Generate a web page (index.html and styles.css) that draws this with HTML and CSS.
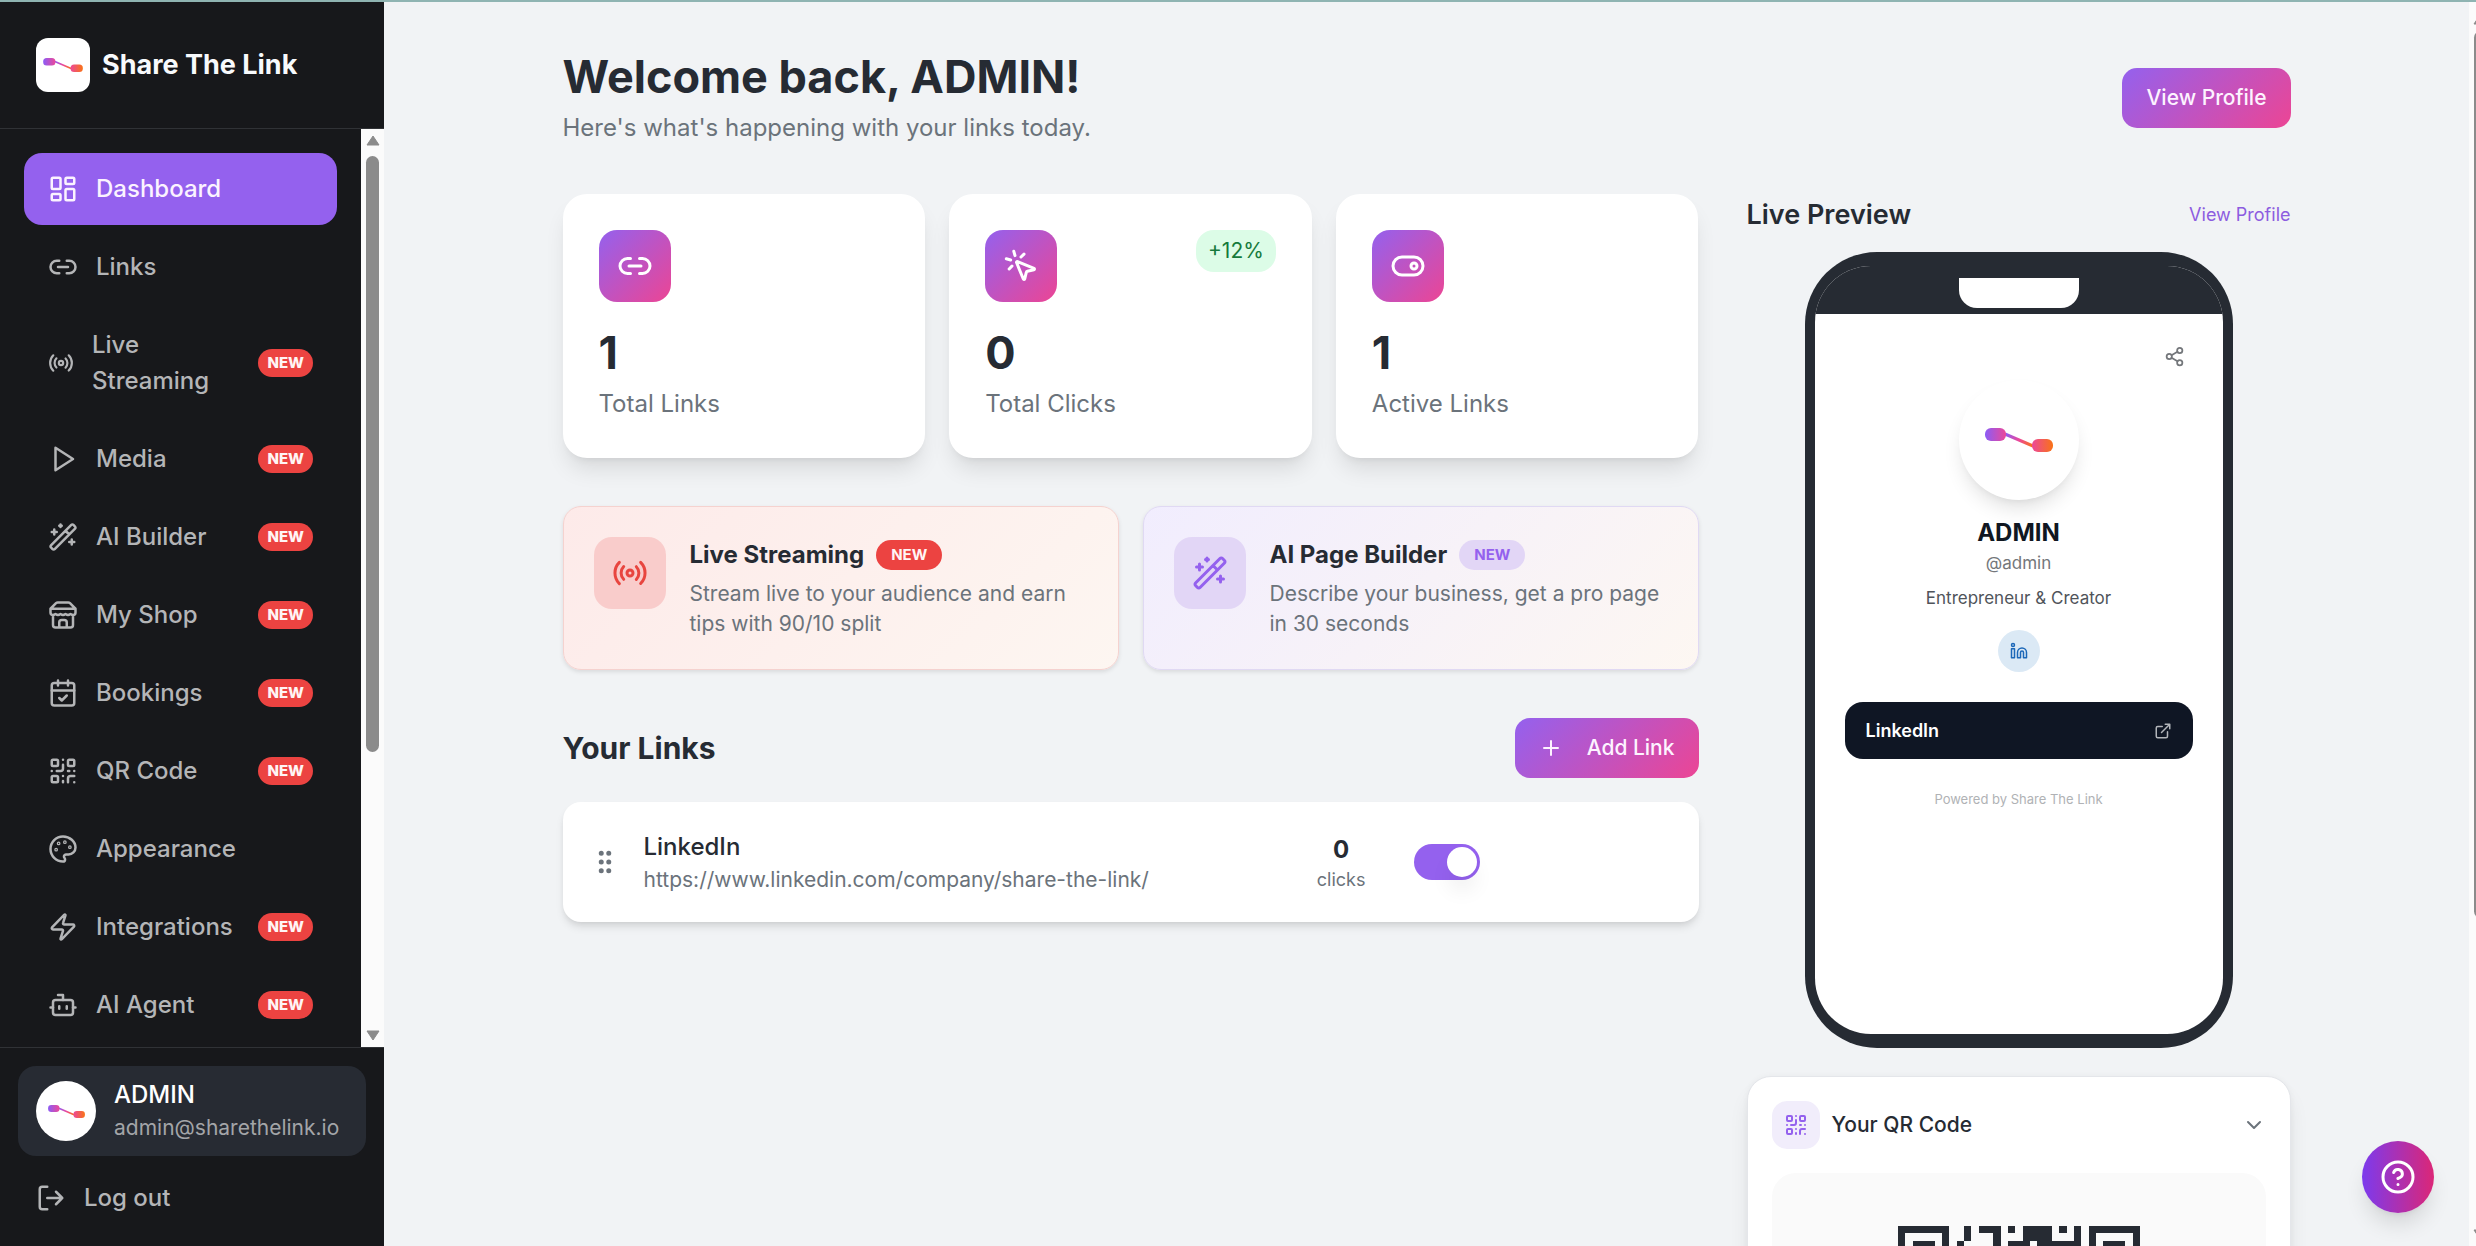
FILE: index.html
```html
<!DOCTYPE html>
<html lang="en">
<head>
<meta charset="utf-8">
<meta name="viewport" content="width=device-width, initial-scale=1">
<title>Dashboard - Share The Link</title>
<link rel="stylesheet" href="styles.css">
</head>
<body>
<svg class="sprite" aria-hidden="true">
  <defs>
    <linearGradient id="brand-a" x1="0" y1="0" x2="1" y2="0"><stop offset="0" stop-color="#8b5cf6"/><stop offset="1" stop-color="#ec4899"/></linearGradient>
    <linearGradient id="brand-b" x1="0" y1="0" x2="1" y2="0"><stop offset="0" stop-color="#ec4899"/><stop offset="1" stop-color="#f97316"/></linearGradient>
    <linearGradient id="brand-c" gradientUnits="userSpaceOnUse" x1="20" y1="6" x2="48" y2="18"><stop offset="0" stop-color="#8b5cf6"/><stop offset=".5" stop-color="#ec4899"/><stop offset="1" stop-color="#f97316"/></linearGradient>
  </defs>
  <symbol id="brand" viewBox="0 0 68 24">
    <path d="M20 6l28 12" stroke="url(#brand-c)" stroke-width="3"/>
    <rect width="21" height="13" rx="6" fill="url(#brand-a)"/>
    <rect x="47" y="11" width="21" height="13" rx="6" fill="url(#brand-b)"/>
  </symbol>
  <symbol id="dashboard" viewBox="0 0 24 24"><rect width="7" height="9" x="3" y="3" rx="1"/><rect width="7" height="5" x="14" y="3" rx="1"/><rect width="7" height="9" x="14" y="12" rx="1"/><rect width="7" height="5" x="3" y="16" rx="1"/></symbol>
  <symbol id="link" viewBox="0 0 24 24"><path d="M9 17H7A5 5 0 0 1 7 7h2M15 7h2a5 5 0 1 1 0 10h-2M8 12h8"/></symbol>
  <symbol id="radio" viewBox="0 0 24 24"><path d="M4.9 19.1C1 15.2 1 8.8 4.9 4.9M7.8 16.2c-2.3-2.3-2.3-6.1 0-8.5M16.2 7.8c2.3 2.3 2.3 6.1 0 8.5M19.1 4.9C23 8.8 23 15.1 19.1 19"/><circle cx="12" cy="12" r="2"/></symbol>
  <symbol id="play" viewBox="0 0 24 24"><path d="M6 3l14 9-14 9z"/></symbol>
  <symbol id="wand" viewBox="0 0 24 24"><path d="m21.64 3.64-1.28-1.28a1.21 1.21 0 0 0-1.72 0L2.36 18.64a1.21 1.21 0 0 0 0 1.72l1.28 1.28a1.2 1.2 0 0 0 1.72 0L21.64 5.36a1.2 1.2 0 0 0 0-1.72M14 7l3 3M5 6v4M19 14v4M10 2v2M7 8H3M21 16h-4M11 3H9"/></symbol>
  <symbol id="store" viewBox="0 0 24 24"><path d="m2 7 4.41-4.41A2 2 0 0 1 7.83 2h8.34a2 2 0 0 1 1.42.59L22 7M4 12v8a2 2 0 0 0 2 2h12a2 2 0 0 0 2-2v-8M15 22v-4a2 2 0 0 0-2-2h-2a2 2 0 0 0-2 2v4M2 7h20M22 7v3a2 2 0 0 1-2 2a2.7 2.7 0 0 1-1.59-.63.7.7 0 0 0-.82 0A2.7 2.7 0 0 1 16 12a2.7 2.7 0 0 1-1.59-.63.7.7 0 0 0-.82 0A2.7 2.7 0 0 1 12 12a2.7 2.7 0 0 1-1.59-.63.7.7 0 0 0-.82 0A2.7 2.7 0 0 1 8 12a2.7 2.7 0 0 1-1.59-.63.7.7 0 0 0-.82 0A2.7 2.7 0 0 1 4 12a2 2 0 0 1-2-2V7"/></symbol>
  <symbol id="calendar" viewBox="0 0 24 24"><rect width="18" height="18" x="3" y="4" rx="2"/><path d="M8 2v4M16 2v4M3 10h18M9 16l2 2 4-4"/></symbol>
  <symbol id="qr" viewBox="0 0 24 24"><rect width="5" height="5" x="3" y="3" rx="1"/><rect width="5" height="5" x="16" y="3" rx="1"/><rect width="5" height="5" x="3" y="16" rx="1"/><path d="M21 16h-3a2 2 0 0 0-2 2v3M21 21v.01M12 7v3a2 2 0 0 1-2 2H7M3 12h.01M12 3h.01M12 16v.01M16 12h1M21 12v.01M12 21v-1"/></symbol>
  <symbol id="palette" viewBox="0 0 24 24"><path d="M12 2C6.5 2 2 6.5 2 12s4.5 10 10 10c.926 0 1.648-.746 1.648-1.688 0-.437-.18-.835-.437-1.125-.29-.289-.438-.652-.438-1.125a1.64 1.64 0 0 1 1.668-1.668h1.996c3.051 0 5.555-2.503 5.555-5.554C21.965 6.012 17.461 2 12 2z"/><circle cx="13.5" cy="6.5" r=".5"/><circle cx="17.5" cy="10.5" r=".5"/><circle cx="8.5" cy="7.5" r=".5"/><circle cx="6.5" cy="12.5" r=".5"/></symbol>
  <symbol id="zap" viewBox="0 0 24 24"><path d="M4 14a1 1 0 0 1-.78-1.63l9.9-10.2a.5.5 0 0 1 .86.46l-1.92 6.02A1 1 0 0 0 13 10h7a1 1 0 0 1 .78 1.63l-9.9 10.2a.5.5 0 0 1-.86-.46l1.92-6.02A1 1 0 0 0 11 14z"/></symbol>
  <symbol id="bot" viewBox="0 0 24 24"><rect width="16" height="12" x="4" y="8" rx="2"/><path d="M12 8V4H8M2 14h2M20 14h2M15 13v2M9 13v2"/></symbol>
  <symbol id="logout" viewBox="0 0 24 24"><path d="M9 21H5a2 2 0 0 1-2-2V5a2 2 0 0 1 2-2h4M16 17l5-5-5-5M21 12H9"/></symbol>
  <symbol id="click" viewBox="0 0 24 24"><path d="M14 4.1 12 6M5.1 8l-2.9-.8M6 12l-1.9 2M7.2 2.2 8 5.1M9.037 9.69a.498.498 0 0 1 .653-.653l11 4.5a.5.5 0 0 1-.074.949l-4.349 1.041a1 1 0 0 0-.74.739l-1.04 4.35a.5.5 0 0 1-.95.074z"/></symbol>
  <symbol id="toggle" viewBox="0 0 24 24"><rect width="20" height="12" x="2" y="6" rx="6"/><circle cx="16" cy="12" r="2"/></symbol>
  <symbol id="plus" viewBox="0 0 24 24"><path d="M5 12h14M12 5v14"/></symbol>
  <symbol id="grip" viewBox="0 0 24 24"><circle cx="9" cy="12" r="1"/><circle cx="9" cy="5" r="1"/><circle cx="9" cy="19" r="1"/><circle cx="15" cy="12" r="1"/><circle cx="15" cy="5" r="1"/><circle cx="15" cy="19" r="1"/></symbol>
  <symbol id="share" viewBox="0 0 24 24"><circle cx="18" cy="5" r="3"/><circle cx="6" cy="12" r="3"/><circle cx="18" cy="19" r="3"/><path d="M8.59 13.51l6.83 3.98M15.41 6.51l-6.82 3.98"/></symbol>
  <symbol id="linkedin" viewBox="0 0 24 24"><path d="M16 8a6 6 0 0 1 6 6v7h-4v-7a2 2 0 0 0-4 0v7h-4v-7a6 6 0 0 1 6-6z"/><rect width="4" height="12" x="2" y="9"/><circle cx="4" cy="4" r="2"/></symbol>
  <symbol id="external" viewBox="0 0 24 24"><path d="M15 3h6v6M10 14 21 3M18 13v6a2 2 0 0 1-2 2H5a2 2 0 0 1-2-2V8a2 2 0 0 1 2-2h6"/></symbol>
  <symbol id="chevron" viewBox="0 0 24 24"><path d="m6 9 6 6 6-6"/></symbol>
  <symbol id="help" viewBox="0 0 24 24"><circle cx="12" cy="12" r="10"/><path d="M9.09 9a3 3 0 0 1 5.83 1c0 2-3 3-3 3M12 17h.01"/></symbol>
</svg>

<div class="app">
  <aside class="sidebar">
    <a class="brand" href="#">
      <span class="brand-mark"><svg class="brand-logo"><use href="#brand"/></svg></span>
      Share The Link
    </a>
    <div class="nav-area">
      <nav class="nav">
        <a class="nav-item active" href="#"><svg class="icon"><use href="#dashboard"/></svg><span class="nav-label">Dashboard</span></a>
        <a class="nav-item" href="#"><svg class="icon"><use href="#link"/></svg><span class="nav-label">Links</span></a>
        <a class="nav-item nav-item-long" href="#"><svg class="icon"><use href="#radio"/></svg><span class="nav-label">Live Streaming</span><span class="tag">NEW</span></a>
        <a class="nav-item" href="#"><svg class="icon"><use href="#play"/></svg><span class="nav-label">Media</span><span class="tag">NEW</span></a>
        <a class="nav-item" href="#"><svg class="icon"><use href="#wand"/></svg><span class="nav-label">AI Builder</span><span class="tag">NEW</span></a>
        <a class="nav-item" href="#"><svg class="icon"><use href="#store"/></svg><span class="nav-label">My Shop</span><span class="tag">NEW</span></a>
        <a class="nav-item" href="#"><svg class="icon"><use href="#calendar"/></svg><span class="nav-label">Bookings</span><span class="tag">NEW</span></a>
        <a class="nav-item" href="#"><svg class="icon"><use href="#qr"/></svg><span class="nav-label">QR Code</span><span class="tag">NEW</span></a>
        <a class="nav-item" href="#"><svg class="icon"><use href="#palette"/></svg><span class="nav-label">Appearance</span></a>
        <a class="nav-item" href="#"><svg class="icon"><use href="#zap"/></svg><span class="nav-label">Integrations</span><span class="tag">NEW</span></a>
        <a class="nav-item" href="#"><svg class="icon"><use href="#bot"/></svg><span class="nav-label">AI Agent</span><span class="tag">NEW</span></a>
      </nav>
      <div class="scrollbar" aria-hidden="true">
        <svg class="arrow" viewBox="0 0 14 11"><path d="M7 1l6 9H1z"/></svg>
        <div class="track"><div class="thumb"></div></div>
        <svg class="arrow" viewBox="0 0 14 11"><path d="M7 10l6-9H1z"/></svg>
      </div>
    </div>
    <div class="account">
      <a class="account-card" href="#">
        <span class="avatar"><svg class="avatar-logo"><use href="#brand"/></svg></span>
        <span class="account-text"><span class="account-name">ADMIN</span><span class="account-mail">admin@sharethelink.io</span></span>
      </a>
      <button class="logout" type="button"><svg class="icon"><use href="#logout"/></svg>Log out</button>
    </div>
  </aside>

  <main class="main">
    <div class="content">
      <header class="page-head">
        <div>
          <h1 class="page-title">Welcome back, ADMIN!</h1>
          <p class="page-sub">Here's what's happening with your links today.</p>
        </div>
        <button class="btn" type="button">View Profile</button>
      </header>

      <div class="columns">
        <div class="left">
          <section class="stats">
            <article class="stat">
              <div class="stat-top"><span class="stat-icon"><svg class="icon-lg"><use href="#link"/></svg></span></div>
              <p class="stat-value">1</p><p class="stat-label">Total Links</p>
            </article>
            <article class="stat">
              <div class="stat-top"><span class="stat-icon"><svg class="icon-lg"><use href="#click"/></svg></span><span class="delta">+12%</span></div>
              <p class="stat-value">0</p><p class="stat-label">Total Clicks</p>
            </article>
            <article class="stat">
              <div class="stat-top"><span class="stat-icon"><svg class="icon-lg"><use href="#toggle"/></svg></span></div>
              <p class="stat-value">1</p><p class="stat-label">Active Links</p>
            </article>
          </section>

          <section class="features">
            <a class="feature feature-live" href="#">
              <span class="feature-icon"><svg class="icon-lg"><use href="#radio"/></svg></span>
              <span class="feature-text">
                <span class="feature-title">Live Streaming <span class="pill">NEW</span></span>
                <span class="feature-desc">Stream live to your audience and earn tips with 90/10 split</span>
              </span>
            </a>
            <a class="feature feature-ai" href="#">
              <span class="feature-icon"><svg class="icon-lg"><use href="#wand"/></svg></span>
              <span class="feature-text">
                <span class="feature-title">AI Page Builder <span class="pill">NEW</span></span>
                <span class="feature-desc">Describe your business, get a pro page in 30 seconds</span>
              </span>
            </a>
          </section>

          <section>
            <div class="links-head">
              <h2 class="section-title">Your Links</h2>
              <button class="btn btn-add" type="button"><svg class="icon-md"><use href="#plus"/></svg>Add Link</button>
            </div>
            <div class="link-row">
              <svg class="icon grip"><use href="#grip"/></svg>
              <div class="link-info">
                <h3 class="link-name">LinkedIn</h3>
                <p class="link-url">https://www.linkedin.com/company/share-the-link/</p>
              </div>
              <div class="clicks"><span class="clicks-count">0</span><span class="clicks-label">clicks</span></div>
              <input class="switch" type="checkbox" role="switch" aria-label="LinkedIn active" checked>
              <div class="link-actions"></div>
            </div>
          </section>
        </div>

        <aside class="right">
          <div class="preview-head">
            <h2 class="preview-title">Live Preview</h2>
            <a class="preview-link" href="#">View Profile</a>
          </div>
          <div class="phone">
            <div class="screen">
              <div class="status"><div class="notch"></div></div>
              <div class="profile">
                <button class="share" type="button" aria-label="Share"><svg class="icon-share"><use href="#share"/></svg></button>
                <div class="profile-avatar"><svg class="profile-logo"><use href="#brand"/></svg></div>
                <h3 class="profile-name">ADMIN</h3>
                <p class="profile-handle">@admin</p>
                <p class="profile-bio">Entrepreneur &amp; Creator</p>
                <a class="social" href="#" aria-label="LinkedIn"><svg class="icon-sm"><use href="#linkedin"/></svg></a>
                <a class="profile-link" href="#">LinkedIn<svg class="icon-sm"><use href="#external"/></svg></a>
                <p class="powered">Powered by Share The Link</p>
              </div>
            </div>
          </div>
          <section class="qr-card">
            <button class="qr-head" type="button">
              <span class="qr-icon"><svg class="icon-md"><use href="#qr"/></svg></span>
              <span class="qr-title">Your QR Code</span>
              <svg class="icon-md qr-chevron"><use href="#chevron"/></svg>
            </button>
            <div class="qr-panel">
              <svg class="qr-image" viewBox="0 0 33 33" shape-rendering="crispEdges" role="img" aria-label="QR code">
                <path fill-rule="evenodd" d="M0 0h7v7H0zM1 1v5h5V1zM2 2h3v3H2zM26 0h7v7h-7zM27 1v5h5V1zM28 2h3v3h-3zM0 26h7v7H0zM1 27v5h5v-5zM2 28h3v3H2z"/>
                <path d="M9 0h1v2H9zM8 2h1v1H8zM11 0h3v1h-3zM13 1h1v2h-1zM15 0h1v1h-1zM17 0h4v2h-4zM22 0h1v1h-1zM24 0h1v2h-1zM15 2h3v1h-3zM19 2h6v1h-6z"/>
              </svg>
            </div>
          </section>
        </aside>
      </div>
    </div>
  </main>

  <div class="scrollbar page-scrollbar" aria-hidden="true">
    <svg class="arrow" viewBox="0 0 14 11"><path d="M7 1l6 9H1z"/></svg>
    <div class="track"><div class="thumb"></div></div>
    <svg class="arrow" viewBox="0 0 14 11"><path d="M7 10l6-9H1z"/></svg>
  </div>
</div>

<button class="help" type="button" aria-label="Help"><svg class="icon-lg"><use href="#help"/></svg></button>
</body>
</html>
```

FILE: styles.css
```css
:root {
  --ink: #262b33;
  --muted: #6b737b;
  --purple: #9461ee;
  --bg: #f1f3f5;
  --brand-gradient: linear-gradient(135deg, #9461ee, #ec4594);
}

* { box-sizing: border-box; margin: 0; padding: 0; }

body {
  height: 100vh;
  overflow: hidden;
  border-top: 2px solid #8fb4b2;
  background: var(--bg);
  color: var(--ink);
  font-family: Inter, "Liberation Sans", sans-serif;
  font-size: 24px;
  line-height: 36px;
}

a { color: inherit; text-decoration: none; }
button { border: 0; background: none; color: inherit; font: inherit; cursor: pointer; }
.sprite { position: absolute; width: 0; height: 0; }

.icon, .icon-lg, .icon-md, .icon-sm, .icon-share {
  flex: none;
  fill: none;
  stroke: currentColor;
  stroke-width: 2;
  stroke-linecap: round;
  stroke-linejoin: round;
}
.icon { width: 30px; height: 30px; }
.icon-lg { width: 36px; height: 36px; }
.icon-md { width: 24px; height: 24px; }
.icon-sm { width: 18px; height: 18px; }
.icon-share { width: 21px; height: 21px; }

.app { display: flex; height: 100%; }

/* Sidebar */
.sidebar {
  display: flex;
  flex-direction: column;
  flex: none;
  width: 384px;
  background: #17181b;
  color: #b4b5b7;
}
.brand {
  display: flex;
  align-items: center;
  gap: 12px;
  padding: 36px;
  border-bottom: 1px solid #303236;
  color: #f8fafc;
  font-size: 27px;
  font-weight: 700;
}
.brand-mark, .avatar, .profile-avatar {
  display: flex;
  align-items: center;
  justify-content: center;
  flex: none;
  background: #fff;
}
.brand-mark { width: 54px; height: 54px; border-radius: 12px; }
.brand-logo { width: 40px; height: 14px; }

.nav-area { display: flex; flex: 1; min-height: 0; }
.nav {
  display: flex;
  flex-direction: column;
  gap: 6px;
  flex: 1;
  padding: 24px;
  overflow: hidden;
}
.nav-item {
  display: flex;
  align-items: center;
  flex: none;
  gap: 18px;
  padding: 18px 24px;
  border-radius: 18px;
  font-weight: 500;
}
.nav-item.active { background: var(--purple); color: #fbf3ff; }
.nav-item-long .icon { width: 26px; }
.nav-label { flex: 1; }
.tag {
  padding: 2px 9px;
  border-radius: 14px;
  background: #ec4341;
  color: #fff5f5;
  font-size: 15px;
  font-weight: 800;
  line-height: 24px;
}

.scrollbar {
  display: flex;
  flex-direction: column;
  align-items: center;
  flex: none;
  width: 23px;
  padding: 6px 0;
  background: #fbfbfb;
}
.arrow { flex: none; width: 14px; height: 11px; fill: #8b8b8b; stroke: #8b8b8b; stroke-linejoin: round; }
.track { flex: 1; padding: 10px 0; }
.thumb { width: 13px; height: 69%; border-radius: 7px; background: #8b8b8b; }

.account { padding: 18px 18px 12px; border-top: 1px solid #303236; }
.account-card {
  display: flex;
  align-items: center;
  gap: 18px;
  padding: 12px 18px;
  border-radius: 18px;
  background: #272b33;
}
.avatar { width: 60px; height: 60px; border-radius: 50%; }
.avatar-logo { width: 37px; height: 13px; }
.account-text { display: flex; flex-direction: column; line-height: 33px; }
.account-name { color: #fff; font-weight: 500; }
.account-mail { color: #a3a5a8; font-size: 21px; }
.logout {
  display: flex;
  align-items: center;
  gap: 18px;
  margin-top: 6px;
  padding: 18px;
  font-weight: 500;
}

/* Page */
.main { flex: 1; min-width: 0; overflow: hidden; }
.content { max-width: 1728px; margin: 0 auto; padding: 48px 0; }
.page-head { display: flex; align-items: center; justify-content: space-between; margin-bottom: 48px; }
.page-title { margin-bottom: 6px; font-size: 45px; font-weight: 700; line-height: 54px; }
.page-sub { color: var(--muted); }
.btn {
  display: flex;
  align-items: center;
  height: 60px;
  padding: 0 24px;
  border-radius: 15px;
  background: var(--brand-gradient);
  color: #fdf3ff;
  font-size: 21px;
  font-weight: 500;
}
.btn-add { gap: 24px; }

.columns { display: grid; grid-template-columns: repeat(3, minmax(0, 1fr)); gap: 48px; align-items: start; }
.left { display: flex; flex-direction: column; gap: 48px; grid-column: span 2; }

.stats { display: grid; grid-template-columns: repeat(3, 1fr); gap: 24px; }
.stat {
  padding: 36px;
  border-radius: 24px;
  background: #fff;
  box-shadow: 0 15px 22px -4px rgba(0, 0, 0, .1), 0 6px 9px -6px rgba(0, 0, 0, .1);
}
.stat-top { display: flex; align-items: flex-start; justify-content: space-between; margin-bottom: 24px; }
.stat-icon, .feature-icon {
  display: flex;
  align-items: center;
  justify-content: center;
  flex: none;
  width: 72px;
  height: 72px;
  border-radius: 18px;
}
.stat-icon { background: var(--brand-gradient); color: #fff; }
.delta {
  padding: 6px 12px;
  border-radius: 18px;
  background: #dcfce7;
  color: #157a3c;
  font-size: 21px;
  line-height: 30px;
}
.stat-value { margin-bottom: 6px; font-size: 45px; font-weight: 700; line-height: 54px; }
.stat-label { color: var(--muted); }

.features { display: grid; grid-template-columns: repeat(2, 1fr); gap: 24px; }
.feature {
  display: flex;
  align-items: flex-start;
  gap: 24px;
  padding: 30px;
  border: 1px solid;
  border-radius: 18px;
  box-shadow: 0 2px 4px rgba(0, 0, 0, .1);
}
.feature-live { border-color: #f5d2cf; background: linear-gradient(135deg, #fdeae9, #fdf6f1); }
.feature-ai { border-color: #e0d9f3; background: linear-gradient(135deg, #f1edfe, #fdf7f2); }
.feature-live .feature-icon { background: #f9cccb; color: #e8453f; }
.feature-ai .feature-icon { background: #e2d6f6; color: var(--purple); }
.feature-text { display: flex; flex-direction: column; gap: 6px; }
.feature-title { display: flex; align-items: center; gap: 12px; font-weight: 700; }
.feature-desc { color: var(--muted); font-size: 21px; line-height: 30px; }
.pill { padding: 3px 15px; border-radius: 15px; font-size: 15px; font-weight: 700; line-height: 24px; }
.feature-live .pill { background: #ec4341; color: #fff5f5; }
.feature-ai .pill { background: #e2d6f6; color: var(--purple); }

.links-head { display: flex; align-items: center; justify-content: space-between; margin-bottom: 24px; }
.section-title { font-size: 30px; font-weight: 700; }
.link-row {
  display: grid;
  grid-template-columns: 30px 1fr auto auto 168px;
  align-items: center;
  gap: 24px;
  padding: 27px;
  border-radius: 18px;
  background: #fff;
  box-shadow: 0 6px 9px -1px rgba(0, 0, 0, .1), 0 3px 6px -3px rgba(0, 0, 0, .1);
}
.grip { color: var(--muted); }
.link-name { font-size: 24px; font-weight: 500; }
.link-url { color: var(--muted); font-size: 21px; line-height: 30px; }
.clicks { display: flex; flex-direction: column; align-items: center; padding-right: 24px; }
.clicks-count { font-weight: 700; }
.clicks-label { color: var(--muted); font-size: 18px; line-height: 24px; }
.switch {
  display: flex;
  justify-content: flex-end;
  width: 66px;
  height: 36px;
  padding: 3px;
  border-radius: 18px;
  background: var(--purple);
  appearance: none;
  cursor: pointer;
}
.switch::before {
  content: "";
  width: 30px;
  height: 30px;
  border-radius: 50%;
  background: #fff;
  box-shadow: 0 15px 22px -4px rgba(0, 0, 0, .1);
}
.switch:not(:checked) { justify-content: flex-start; background: #d4d6da; }

/* Phone preview */
.right { display: flex; flex-direction: column; }
.preview-head { display: flex; align-items: center; justify-content: space-between; margin-bottom: 16px; line-height: 42px; }
.preview-title { font-size: 27px; font-weight: 600; }
.preview-link { color: #8c5ce0; font-size: 18px; }
.phone {
  align-self: center;
  width: 428px;
  max-width: 100%;
  margin-bottom: 28px;
  padding: 14px 10px;
  border-radius: 72px;
  background: var(--ink);
}
.screen { min-height: 768px; overflow: hidden; border-radius: 56px; background: #fff; }
.status { height: 48px; padding-top: 12px; background: var(--ink); }
.notch { width: 120px; height: 30px; margin: 0 auto; border-radius: 0 0 18px 18px; background: #fff; }
.profile { display: flex; flex-direction: column; align-items: center; padding: 24px 30px; text-align: center; }
.share {
  display: flex;
  align-items: center;
  justify-content: center;
  align-self: flex-end;
  width: 36px;
  height: 36px;
  margin-bottom: 6px;
  color: #74777b;
}
.profile-avatar {
  width: 120px;
  height: 120px;
  margin-bottom: 15px;
  border-radius: 50%;
  box-shadow: 0 12px 20px -4px rgba(0, 0, 0, .12), 0 6px 9px -6px rgba(0, 0, 0, .08);
}
.profile-logo { width: 68px; height: 24px; }
.profile-name { color: #101722; font-size: 24px; font-weight: 700; }
.profile-handle { margin-bottom: 9px; color: #74777b; font-size: 17px; line-height: 24px; }
.profile-bio { margin-bottom: 18px; color: #50545a; font-size: 17px; line-height: 28px; }
.social {
  display: flex;
  align-items: center;
  justify-content: center;
  width: 42px;
  height: 42px;
  margin-bottom: 30px;
  border-radius: 50%;
  background: #dbe9f5;
  color: #1c68b8;
}
.profile-link {
  display: flex;
  align-items: center;
  justify-content: space-between;
  align-self: stretch;
  margin-bottom: 28px;
  padding: 15px 21px;
  border-radius: 18px;
  background: #0f1624;
  color: #fff;
  font-size: 18px;
  font-weight: 600;
  line-height: 27px;
}
.profile-link .icon-sm { color: #b2b5ba; }
.powered { color: #b0b2b5; font-size: 13px; line-height: 24px; }

/* QR card */
.qr-card {
  padding: 24px;
  border: 1px solid #e4e6ea;
  border-radius: 24px;
  background: #fff;
  box-shadow: 0 15px 22px -4px rgba(0, 0, 0, .1), 0 0 6px rgba(0, 0, 0, .04);
}
.qr-head { display: flex; align-items: center; gap: 12px; width: 100%; margin-bottom: 24px; }
.qr-icon {
  display: flex;
  align-items: center;
  justify-content: center;
  width: 48px;
  height: 48px;
  border-radius: 15px;
  background: #f1edfb;
  color: var(--purple);
}
.qr-title { flex: 1; font-size: 21px; font-weight: 500; text-align: left; }
.qr-chevron { color: var(--muted); }
.qr-panel { display: flex; justify-content: center; padding: 53px 24px; border-radius: 24px; background: #fafafa; }
.qr-image { width: 242px; height: 242px; fill: var(--ink); }

/* Page scrollbar sits partly past the right edge of the window */
.page-scrollbar { align-items: flex-start; width: 7px; padding: 12px 0 6px 4px; overflow: hidden; }
.page-scrollbar .track { padding: 6px 1px 0; }
.page-scrollbar .thumb { height: 74%; }

.help {
  position: fixed;
  right: 42px;
  bottom: 33px;
  display: flex;
  align-items: center;
  justify-content: center;
  width: 72px;
  height: 72px;
  border-radius: 50%;
  background: linear-gradient(90deg, #7c3aed, #db2777);
  color: #fff;
  box-shadow: 0 15px 22px -4px rgba(0, 0, 0, .12), 0 6px 9px -6px rgba(0, 0, 0, .1);
}
```
